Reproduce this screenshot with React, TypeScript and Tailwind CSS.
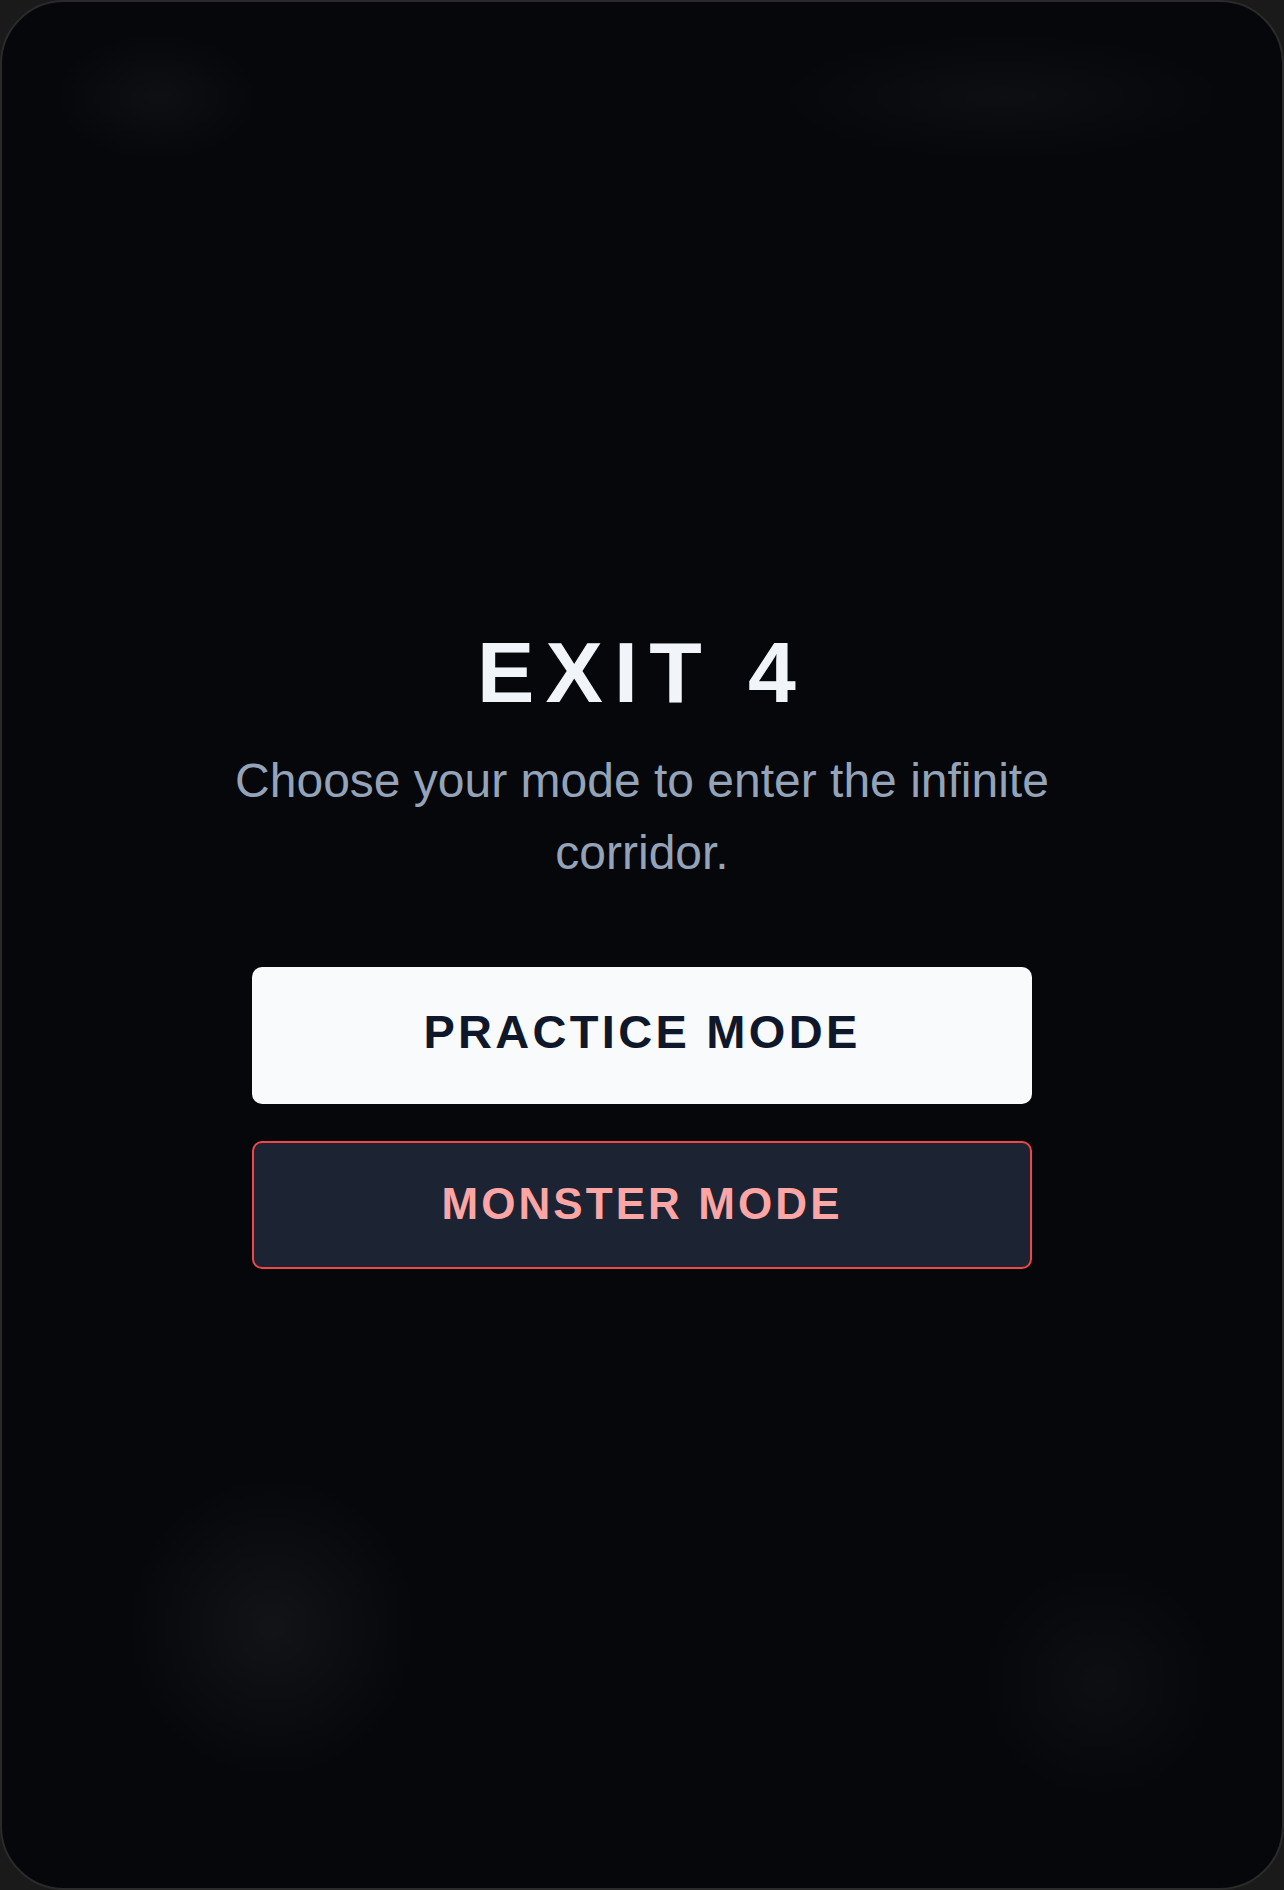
import React from "react";

export default function App() {
  return (
    <div className="w-full h-[1890px] bg-[#1a1a1a]" style={{ fontFamily: '"Liberation Sans", Arial, sans-serif' }}>
      <div className="relative h-full w-full overflow-hidden rounded-[64px] border-2 border-[#2a2a2a] bg-[#05070b] flex flex-col items-center justify-center pt-[8px]">
        {/* faint background glows */}
        <div className="pointer-events-none absolute left-[50px] top-[30px] h-[130px] w-[210px] rounded-full bg-[radial-gradient(ellipse_at_center,rgba(255,255,255,0.035),transparent_70%)]" />
        <div className="pointer-events-none absolute left-[770px] top-[30px] h-[130px] w-[460px] rounded-full bg-[radial-gradient(ellipse_at_center,rgba(255,255,255,0.03),transparent_70%)]" />
        <div className="pointer-events-none absolute left-[110px] top-[1460px] h-[330px] w-[320px] rounded-full bg-[radial-gradient(ellipse_at_center,rgba(255,255,255,0.05),transparent_65%)]" />
        <div className="pointer-events-none absolute left-[975px] top-[1560px] h-[240px] w-[245px] rounded-full bg-[radial-gradient(ellipse_at_center,rgba(255,255,255,0.03),transparent_70%)]" />

        <div className="relative flex flex-col items-center">
          <h1 className="text-[86px] leading-none font-bold tracking-[0.13em] text-[#f1f5f9]">EXIT 4</h1>
          <p className="mt-[30px] max-w-[900px] text-center text-[48px] leading-[72px] text-[#94a3b8]">
            Choose your mode to enter the infinite corridor.
          </p>
          <div className="mt-[78px] flex w-[780px] flex-col gap-[37px]">
            <button className="h-[137px] w-full rounded-[10px] bg-[#f8fafc] pb-[7px] text-[47px] font-bold tracking-[0.07em] text-[#0f172a]">
              PRACTICE MODE
            </button>
            <button className="h-[128px] w-full rounded-[10px] border-2 border-[#f04646] bg-[#1c2333] pb-[2px] text-[44px] font-bold tracking-[0.07em] text-[#fca5a5]">
              MONSTER MODE
            </button>
          </div>
        </div>
      </div>
    </div>
  );
}
